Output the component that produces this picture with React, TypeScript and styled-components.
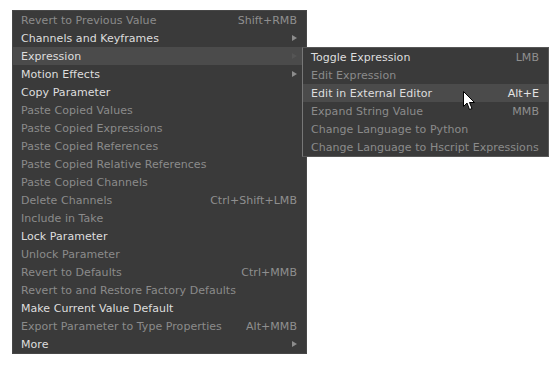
import React from "react";
import styled, { createGlobalStyle } from "styled-components";

const Global = createGlobalStyle`
  html, body { margin: 0; padding: 0; background: #ffffff; }
  body { font-family: "DejaVu Sans", sans-serif; }
`;

const Stage = styled.div`
  position: relative;
  width: 556px;
  height: 365px;
  padding: 10px 0 0 12px;
  box-sizing: border-box;
`;

const Menu = styled.div<{ $width: number }>`
  width: ${(p) => p.$width}px;
  box-sizing: border-box;
  background: #3a3a3a;
  border: 1px solid #474747;
  display: flex;
  flex-direction: column;
`;

const SubMenu = styled(Menu)`
  position: absolute;
  left: 302px;
  top: 47px;
  border-color: #575757;
  border-left-color: #777777;
`;

const Row = styled.div<{ $active?: boolean; $disabled?: boolean; $pad: number }>`
  height: 18px;
  display: flex;
  align-items: center;
  padding: 0 ${(p) => p.$pad}px 0 8px;
  background: ${(p) => (p.$active ? "#4b4b4b" : "transparent")};
  color: ${(p) => (p.$disabled ? "#8b8b8b" : "#dedede")};
  font-size: 11px;
  letter-spacing: 0.05px;
  white-space: nowrap;
`;

const Label = styled.span`
  flex: 1;
`;

const Shortcut = styled.span<{ $bright?: boolean }>`
  color: ${(p) => (p.$bright ? "#e4e4e4" : "#8f8f8f")};
`;

const Arrow = styled.span<{ $dim?: boolean }>`
  width: 0;
  height: 0;
  border-top: 3.5px solid transparent;
  border-bottom: 3.5px solid transparent;
  border-left: 5px solid ${(p) => (p.$dim ? "#555555" : "#8c8c8c")};
`;

const Cursor = styled.svg`
  position: absolute;
  left: 463px;
  top: 91px;
`;

type Item = {
  label: string;
  shortcut?: string;
  disabled?: boolean;
  submenu?: boolean;
  active?: boolean;
  dimArrow?: boolean;
};

const mainItems: Item[] = [
  { label: "Revert to Previous Value", shortcut: "Shift+RMB", disabled: true },
  { label: "Channels and Keyframes", submenu: true },
  { label: "Expression", submenu: true, active: true, dimArrow: true },
  { label: "Motion Effects", submenu: true },
  { label: "Copy Parameter" },
  { label: "Paste Copied Values", disabled: true },
  { label: "Paste Copied Expressions", disabled: true },
  { label: "Paste Copied References", disabled: true },
  { label: "Paste Copied Relative References", disabled: true },
  { label: "Paste Copied Channels", disabled: true },
  { label: "Delete Channels", shortcut: "Ctrl+Shift+LMB", disabled: true },
  { label: "Include in Take", disabled: true },
  { label: "Lock Parameter" },
  { label: "Unlock Parameter", disabled: true },
  { label: "Revert to Defaults", shortcut: "Ctrl+MMB", disabled: true },
  { label: "Revert to and Restore Factory Defaults", disabled: true },
  { label: "Make Current Value Default" },
  { label: "Export Parameter to Type Properties", shortcut: "Alt+MMB", disabled: true },
  { label: "More", submenu: true },
];

const subItems: Item[] = [
  { label: "Toggle Expression", shortcut: "LMB" },
  { label: "Edit Expression", disabled: true },
  { label: "Edit in External Editor", shortcut: "Alt+E", active: true },
  { label: "Expand String Value", shortcut: "MMB", disabled: true },
  { label: "Change Language to Python", disabled: true },
  { label: "Change Language to Hscript Expressions", disabled: true },
];

export default function App() {
  return (
    <>
      <Global />
      <Stage>
        <Menu $width={295}>
          {mainItems.map((it) => (
            <Row key={it.label} $active={it.active} $disabled={it.disabled} $pad={9}>
              <Label>{it.label}</Label>
              {it.shortcut && <Shortcut>{it.shortcut}</Shortcut>}
              {it.submenu && <Arrow $dim={it.dimArrow} />}
            </Row>
          ))}
        </Menu>
        <SubMenu $width={247}>
          {subItems.map((it) => (
            <Row key={it.label} $active={it.active} $disabled={it.disabled} $pad={9}>
              <Label>{it.label}</Label>
              {it.shortcut && <Shortcut $bright={it.active}>{it.shortcut}</Shortcut>}
            </Row>
          ))}
        </SubMenu>
        <Cursor width="13" height="20" viewBox="0 0 13 20">
          <path
            d="M0.5 0.5 L0.5 15.5 L4 12 L6.5 18.5 L9 17.5 L6.5 11.5 L11.5 11.5 Z"
            fill="#ffffff"
            stroke="#000000"
            strokeWidth="1"
            strokeLinejoin="miter"
          />
        </Cursor>
      </Stage>
    </>
  );
}
